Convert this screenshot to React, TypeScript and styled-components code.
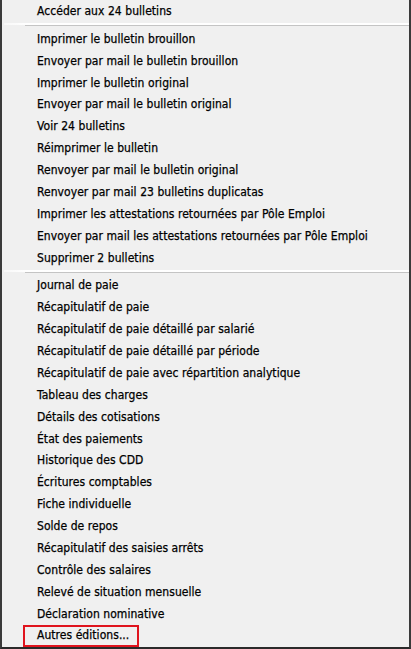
import React from "react";
import styled, { createGlobalStyle } from "styled-components";

const Global = createGlobalStyle`
  html, body { margin: 0; padding: 0; background: #ffffff; }
  body { width: 411px; height: 649px; overflow: hidden; }
`;

const Menu = styled.div`
  box-sizing: border-box;
  width: 411px;
  height: 649px;
  background: #f0f0f0;
  border-left: 2px solid #3a3a3a;
  border-right: 2px solid #3a3a3a;
  border-bottom: 2px solid #2a2a2a;
  display: flex;
  flex-direction: column;
  font-family: "DejaVu Sans Condensed", "DejaVu Sans", sans-serif;
  font-size: 12px;
  letter-spacing: 0.05px;
  color: #000;
  -webkit-text-stroke: 0.25px #000;
`;

const Item = styled.div`
  position: relative;
  height: 21.875px;
  display: flex;
  align-items: center;
  padding-left: 35px;
  white-space: nowrap;
  flex-shrink: 0;
`;

const Highlight = styled.div`
  position: absolute;
  left: 21px;
  top: 0px;
  width: 116px;
  height: 22px;
  box-sizing: border-box;
  border: 2px solid #e0141e;
`;

const Separator = styled.div`
  height: 6px;
  flex-shrink: 0;
  position: relative;
  &::before {
    content: "";
    position: absolute;
    left: 2px;
    right: 0;
    top: 1px;
    height: 2px;
    background: linear-gradient(to right, #f8f8f8 0, #ffffff 23px, #ffffff 100%);
  }
  &::after {
    content: "";
    position: absolute;
    left: 23px;
    right: 0;
    top: 3px;
    height: 1px;
    background: #c4c4c4;
  }
`;

const group1 = ["Accéder aux 24 bulletins"];
const group2 = [
  "Imprimer le bulletin brouillon",
  "Envoyer par mail le bulletin brouillon",
  "Imprimer le bulletin original",
  "Envoyer par mail le bulletin original",
  "Voir 24 bulletins",
  "Réimprimer le bulletin",
  "Renvoyer par mail le bulletin original",
  "Renvoyer par mail 23 bulletins duplicatas",
  "Imprimer les attestations retournées par Pôle Emploi",
  "Envoyer par mail les attestations retournées par Pôle Emploi",
  "Supprimer 2 bulletins",
];
const group3 = [
  "Journal de paie",
  "Récapitulatif de paie",
  "Récapitulatif de paie détaillé par salarié",
  "Récapitulatif de paie détaillé par période",
  "Récapitulatif de paie avec répartition analytique",
  "Tableau des charges",
  "Détails des cotisations",
  "État des paiements",
  "Historique des CDD",
  "Écritures comptables",
  "Fiche individuelle",
  "Solde de repos",
  "Récapitulatif des saisies arrêts",
  "Contrôle des salaires",
  "Relevé de situation mensuelle",
  "Déclaration nominative",
];

export default function App() {
  return (
    <>
      <Global />
      <Menu>
        {group1.map((t) => (
          <Item key={t}>{t}</Item>
        ))}
        <Separator />
        {group2.map((t) => (
          <Item key={t}>{t}</Item>
        ))}
        <Separator />
        {group3.map((t) => (
          <Item key={t}>{t}</Item>
        ))}
        <Item>
          <Highlight />
          Autres éditions...
        </Item>
      </Menu>
    </>
  );
}
